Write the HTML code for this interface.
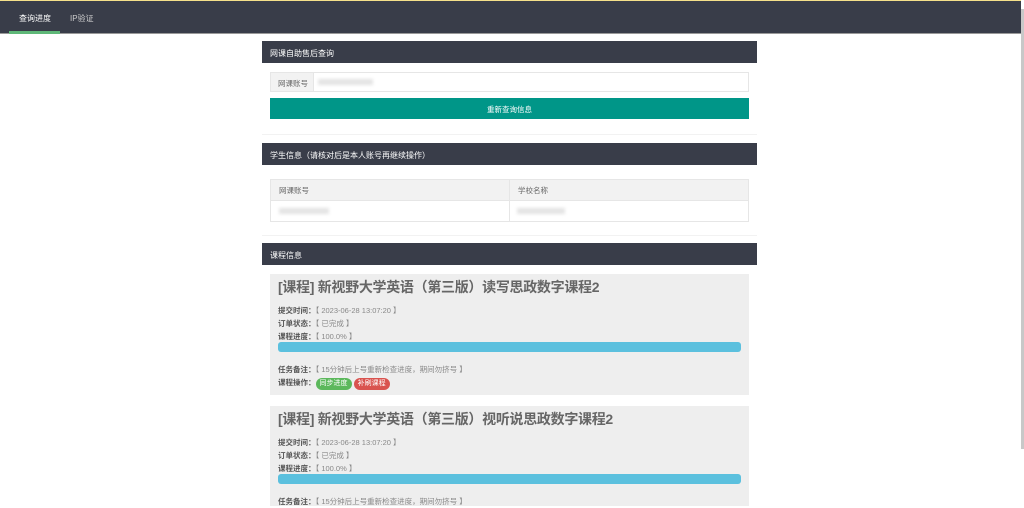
<!DOCTYPE html>
<html><head><meta charset="utf-8"><style>
*{box-sizing:border-box;margin:0;padding:0}
body{width:1024px;height:502px;overflow:hidden;background:#fff;font-family:"Liberation Sans","Noto Sans CJK SC",sans-serif;font-size:8px;color:#666;position:relative}
.nav{position:absolute;left:0;top:0;width:1021px;height:34px;background:#393d49;border-top:1px solid #f5e08a;border-bottom:1px solid #999}
.nav span{position:absolute;top:12px;color:#fff;font-size:8px}
.nav .u{position:absolute;left:9px;top:30px;width:51px;height:3px;background:#5fb878}
.sb{position:absolute;left:1021px;top:9px;width:3px;height:440px;background:#c8c8c8}
.ab{position:absolute}
.hd{position:absolute;left:262px;width:495px;height:22px;background:#393d49;color:#fff;font-size:8px;padding:7px 0 0 8px}
.card{position:absolute;left:270px;width:479px;background:#eee;padding:0 8px}
.card h2{font-size:14px;color:#666;font-weight:bold;margin-top:2px;height:22px;line-height:22px;letter-spacing:-0.3px}
.card .ln{font-size:7.5px;line-height:13px;color:#888}
.card .ln b{color:#555;font-weight:bold}
.bar{height:10px;background:#5bc0de;border-radius:3px;margin:2px 0 0}
.bd{display:inline-block;color:#fff;border-radius:6px;padding:0 4px;font-size:7px;line-height:12px}
.blur{position:absolute;height:6px;background:#e4e4e4;filter:blur(1.5px)}
</style></head><body>
<div class="nav"><span style="left:19px">查询进度</span><span style="left:70px;color:#ccc">IP验证</span><div class="u"></div></div>
<div class="sb"></div>

<div class="hd" style="top:41px">网课自助售后查询</div>
<div class="ab" style="left:270px;top:72px;width:479px;height:20px;border:1px solid #e6e6e6"></div>
<div class="ab" style="left:270px;top:72px;width:44px;height:20px;background:#f2f2f2;border:1px solid #e6e6e6;padding:5px 0 0 7px;font-size:7.5px;color:#666">网课账号</div>
<div class="blur" style="left:318px;top:79px;width:55px"></div>
<div class="ab" style="left:270px;top:98px;width:479px;height:21px;background:#009688;color:#fff;text-align:center;font-size:7.5px;padding-top:6px">重新查询信息</div>
<div class="ab" style="left:262px;top:134px;width:495px;height:1px;background:#f2f2f2"></div>

<div class="hd" style="top:143px">学生信息（请核对后是本人账号再继续操作）</div>
<div class="ab" style="left:270px;top:179px;width:479px;height:43px;border:1px solid #e6e6e6"></div>
<div class="ab" style="left:271px;top:180px;width:477px;height:21px;background:#f2f2f2;border-bottom:1px solid #e6e6e6"></div>
<div class="ab" style="left:509px;top:180px;width:1px;height:41px;background:#e6e6e6"></div>
<div class="ab" style="left:279px;top:185px;font-size:7.5px;color:#666">网课账号</div>
<div class="ab" style="left:518px;top:185px;font-size:7.5px;color:#666">学校名称</div>
<div class="blur" style="left:279px;top:208px;width:50px"></div>
<div class="blur" style="left:517px;top:208px;width:48px"></div>
<div class="ab" style="left:262px;top:235px;width:495px;height:1px;background:#f2f2f2"></div>

<div class="hd" style="top:243px">课程信息</div>
<div class="card" style="top:274px;height:121px">
<h2>[课程] 新视野大学英语（第三版）读写思政数字课程2</h2>
<div style="height:6px"></div>
<div class="ln"><b>提交时间：</b>【 2023-06-28 13:07:20 】</div>
<div class="ln"><b>订单状态：</b>【 已完成 】</div>
<div class="ln"><b>课程进度：</b>【 100.0% 】</div>
<div class="bar" style="margin-top:-1px"></div>
<div style="height:11px"></div>
<div class="ln"><b>任务备注：</b>【 15分钟后上号重新检查进度，期间勿挤号 】</div>
<div class="ln"><b>课程操作：</b><span class="bd" style="background:#5cb85c">同步进度</span> <span class="bd" style="background:#d9534f">补刷课程</span></div>
</div>
<div class="card" style="top:406px;height:100px">
<h2>[课程] 新视野大学英语（第三版）视听说思政数字课程2</h2>
<div style="height:6px"></div>
<div class="ln"><b>提交时间：</b>【 2023-06-28 13:07:20 】</div>
<div class="ln"><b>订单状态：</b>【 已完成 】</div>
<div class="ln"><b>课程进度：</b>【 100.0% 】</div>
<div class="bar" style="margin-top:-1px"></div>
<div style="height:11px"></div>
<div class="ln"><b>任务备注：</b>【 15分钟后上号重新检查进度，期间勿挤号 】</div>
</div>
</body></html>
